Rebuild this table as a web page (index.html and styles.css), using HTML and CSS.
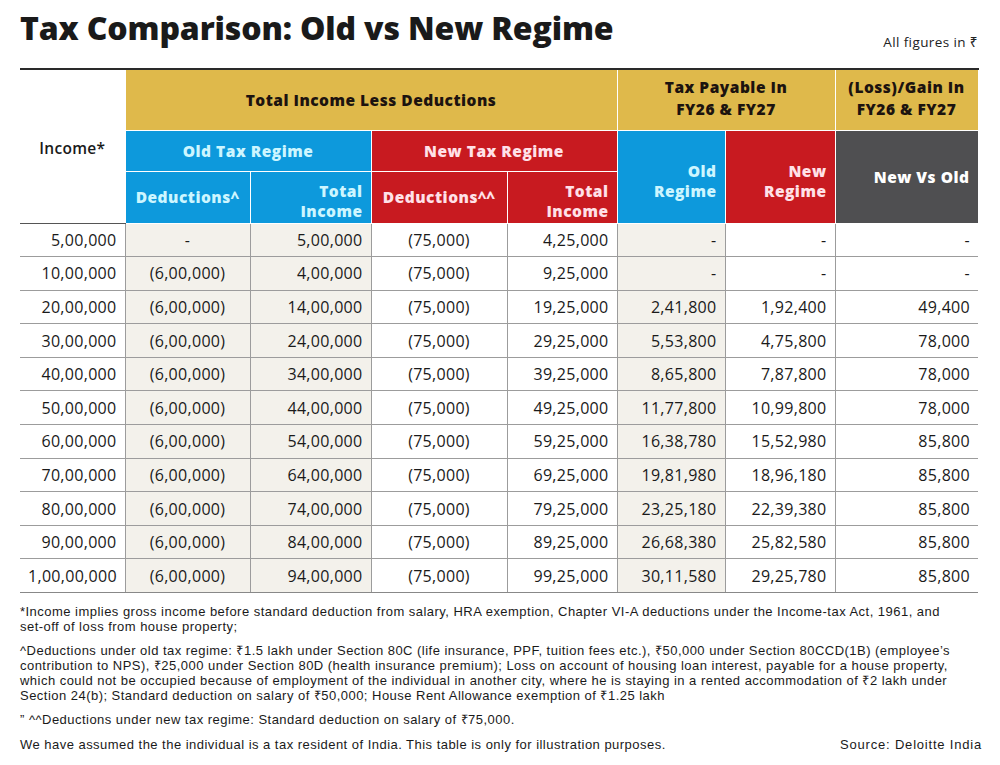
FILE: index.html
```html
<!DOCTYPE html>
<html>
<head>
<meta charset="utf-8">
<link rel="stylesheet" href="styles.css">
</head>
<body>
<div class="page">
  <div class="top">
    <h1 class="title">Tax Comparison: Old vs New Regime</h1>
    <div class="units">All figures in ₹</div>
  </div>
  <table class="tax">
    <colgroup>
      <col class="w105"><col class="w125"><col class="w121"><col class="w136"><col class="w110"><col class="w108"><col class="w110"><col class="w143">
    </colgroup>
    <thead>
      <tr class="h1">
        <th class="inc" rowspan="3">Income*</th>
        <th class="gold" colspan="4">Total Income Less Deductions</th>
        <th class="gold two" colspan="2">Tax Payable In<br>FY26 &amp; FY27</th>
        <th class="gold two">(Loss)/Gain In<br>FY26 &amp; FY27</th>
      </tr>
      <tr class="h2">
        <th class="blue" colspan="2">Old Tax Regime</th>
        <th class="red" colspan="2">New Tax Regime</th>
        <th class="blue r lower" rowspan="2">Old<br>Regime</th>
        <th class="red r lower" rowspan="2">New<br>Regime</th>
        <th class="grey r" rowspan="2">New Vs Old</th>
      </tr>
      <tr class="h3">
        <th class="blue">Deductions^</th>
        <th class="blue r bot">Total<br>Income</th>
        <th class="red">Deductions^^</th>
        <th class="red r bot">Total<br>Income</th>
      </tr>
    </thead>
    <tbody>
      <tr><td class="r">5,00,000</td><td class="c bg">-</td><td class="r bg">5,00,000</td><td class="c">(75,000)</td><td class="r">4,25,000</td><td class="r bg">-</td><td class="r">-</td><td class="r">-</td></tr>
      <tr><td class="r">10,00,000</td><td class="c bg">(6,00,000)</td><td class="r bg">4,00,000</td><td class="c">(75,000)</td><td class="r">9,25,000</td><td class="r bg">-</td><td class="r">-</td><td class="r">-</td></tr>
      <tr><td class="r">20,00,000</td><td class="c bg">(6,00,000)</td><td class="r bg">14,00,000</td><td class="c">(75,000)</td><td class="r">19,25,000</td><td class="r bg">2,41,800</td><td class="r">1,92,400</td><td class="r">49,400</td></tr>
      <tr><td class="r">30,00,000</td><td class="c bg">(6,00,000)</td><td class="r bg">24,00,000</td><td class="c">(75,000)</td><td class="r">29,25,000</td><td class="r bg">5,53,800</td><td class="r">4,75,800</td><td class="r">78,000</td></tr>
      <tr><td class="r">40,00,000</td><td class="c bg">(6,00,000)</td><td class="r bg">34,00,000</td><td class="c">(75,000)</td><td class="r">39,25,000</td><td class="r bg">8,65,800</td><td class="r">7,87,800</td><td class="r">78,000</td></tr>
      <tr><td class="r">50,00,000</td><td class="c bg">(6,00,000)</td><td class="r bg">44,00,000</td><td class="c">(75,000)</td><td class="r">49,25,000</td><td class="r bg">11,77,800</td><td class="r">10,99,800</td><td class="r">78,000</td></tr>
      <tr><td class="r">60,00,000</td><td class="c bg">(6,00,000)</td><td class="r bg">54,00,000</td><td class="c">(75,000)</td><td class="r">59,25,000</td><td class="r bg">16,38,780</td><td class="r">15,52,980</td><td class="r">85,800</td></tr>
      <tr><td class="r">70,00,000</td><td class="c bg">(6,00,000)</td><td class="r bg">64,00,000</td><td class="c">(75,000)</td><td class="r">69,25,000</td><td class="r bg">19,81,980</td><td class="r">18,96,180</td><td class="r">85,800</td></tr>
      <tr><td class="r">80,00,000</td><td class="c bg">(6,00,000)</td><td class="r bg">74,00,000</td><td class="c">(75,000)</td><td class="r">79,25,000</td><td class="r bg">23,25,180</td><td class="r">22,39,380</td><td class="r">85,800</td></tr>
      <tr><td class="r">90,00,000</td><td class="c bg">(6,00,000)</td><td class="r bg">84,00,000</td><td class="c">(75,000)</td><td class="r">89,25,000</td><td class="r bg">26,68,380</td><td class="r">25,82,580</td><td class="r">85,800</td></tr>
      <tr><td class="r">1,00,00,000</td><td class="c bg">(6,00,000)</td><td class="r bg">94,00,000</td><td class="c">(75,000)</td><td class="r">99,25,000</td><td class="r bg">30,11,580</td><td class="r">29,25,780</td><td class="r">85,800</td></tr>
    </tbody>
  </table>
  <div class="notes">
    <div class="para">
      <span class="ln">*Income implies gross income before standard deduction from salary, HRA exemption, Chapter VI-A deductions under the Income-tax Act, 1961, and</span>
      <span class="ln">set-off of loss from house property;</span>
    </div>
    <div class="para">
      <span class="ln">^Deductions under old tax regime: ₹1.5 lakh under Section 80C (life insurance, PPF, tuition fees etc.), ₹50,000 under Section 80CCD(1B) (employee’s</span>
      <span class="ln">contribution to NPS), ₹25,000 under Section 80D (health insurance premium); Loss on account of housing loan interest, payable for a house property,</span>
      <span class="ln">which could not be occupied because of employment of the individual in another city, where he is staying in a rented accommodation of ₹2 lakh under</span>
      <span class="ln">Section 24(b); Standard deduction on salary of ₹50,000; House Rent Allowance exemption of ₹1.25 lakh</span>
    </div>
    <div class="para nn">
      <span class="ln">” ^^Deductions under new tax regime: Standard deduction on salary of ₹75,000.</span>
    </div>
    <div class="last">
      <span>We have assumed the the individual is a tax resident of India. This table is only for illustration purposes.</span>
      <span class="src">Source: Deloitte India</span>
    </div>
  </div>
</div>
</body>
</html>
```

FILE: styles.css
```css
* { box-sizing: border-box; }
html, body { margin: 0; padding: 0; background: #fff; }
body {
  font-family: "Open Sans", "Noto Sans", sans-serif;
  color: #1b1b1b;
}
.page {
  width: 1000px;
  height: 765px;
  padding: 8px 20px 0 20px;
}
.top {
  display: flex;
  justify-content: space-between;
  align-items: flex-end;
  height: 60px;
}
.title {
  margin: 0;
  font-size: 32px;
  font-weight: 800;
  line-height: 40px;
  letter-spacing: -0.15px;
  color: #1a1a1a;
  align-self: flex-start;
}
.units {
  font-size: 13.5px;
  letter-spacing: 0.4px;
  color: #222;
  padding-bottom: 17px;
  margin-right: 2px;
}
.w105 { width: 105px; }
.w125 { width: 125px; }
.w121 { width: 121px; }
.w136 { width: 136px; }
.w110 { width: 110px; }
.w108 { width: 108px; }
.w143 { width: 143px; }
.tax {
  width: 958px;
  border-collapse: collapse;
  table-layout: fixed;
}
.tax th {
  font-weight: 800;
  font-size: 15.5px;
  letter-spacing: 0.5px;
  line-height: 20px;
  border: 1px solid #fff;
  padding: 0 8px;
}
.tax .h1 th { border-top: 2px solid #2a2a2a; height: 61px; }
.tax .h2 th { height: 41px; }
.tax .h3 th { height: 52px; }
.tax th.two { line-height: 22px; padding-bottom: 4px; }
.tax th.inc {
  background: #fff;
  color: #1a1a1a;
  font-weight: 600;
  letter-spacing: 0.3px;
  border-left: none;
  border-bottom: 1px solid #555;
  vertical-align: middle;
  padding-top: 4px;
}
.tax th.gold { background: #dfb94b; color: #1c130f; }
.tax th.blue { background: #0d99dc; color: #cdf6ff; }
.tax th.red { background: #c81a20; color: #ffe1e8; }
.tax th.grey { background: #4f4f51; color: #fff; }
.tax th.r { text-align: right; }
.tax th.bot { vertical-align: bottom; padding-bottom: 2px; line-height: 20px; }
.tax th.lower { padding-top: 8px; }
.tax td {
  height: 33.6px;
  font-size: 16px;
  letter-spacing: 0.3px;
  padding: 0 8px;
  border: 1px solid #9c9c9c;
  color: #1a1a1a;
}
.tax tbody tr:first-child td { border-top: 1px solid #555; }
.tax td:first-child { border-left: none; }
.tax td:last-child { border-right: none; }
.tax td.r { text-align: right; }
.tax td.c { text-align: center; }
.tax td.bg { background: #f3f1eb; }
.tax tbody tr:last-child td { border-bottom: 1px solid #888; }
.notes {
  font-family: "Liberation Sans", Arial, sans-serif;
  font-size: 13px;
  letter-spacing: 0.47px;
  color: #1a1a1a;
  padding-top: 11px;
  white-space: nowrap;
}
.para { margin: 0 0 9px 0; }
.para.nn { margin-bottom: 7px; }
.ln {
  display: block;
  height: 15px;
  line-height: 15px;
}
.last {
  display: flex;
  justify-content: space-between;
  line-height: 15px;
  margin-top: 10px;
}
.src { margin-right: -2px; letter-spacing: 0.8px; }
```
